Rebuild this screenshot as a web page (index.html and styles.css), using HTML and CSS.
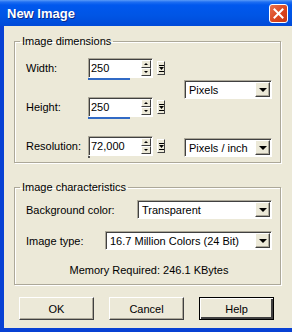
FILE: index.html
```html
<!DOCTYPE html>
<html>
<head>
  <title>New Image</title>
  <link rel="stylesheet" href="styles.css">
</head>
<body>
  <div class="window">
    <div class="titlebar">
      <span class="title">New Image</span>
      <div class="close">
        <svg width="11" height="11" viewBox="0 0 11 11">
          <path d="M1.5 1.5 L9.5 9.5 M9.5 1.5 L1.5 9.5" stroke="#fff" stroke-width="2" stroke-linecap="square"/>
        </svg>
      </div>
    </div>

    <div class="frame">
      <fieldset class="group">
        <legend>Image dimensions</legend>
        <div class="dims">
          <label class="dim-label r1">Width:</label>
          <div class="spin-wrap r1">
            <div class="spin">
              <div class="spin-box">
                <span class="spin-value">250</span>
                <div class="spin-btns">
                  <div class="spin-btn"><i class="tri-up"></i></div>
                  <div class="spin-btn"><i class="tri-down"></i></div>
                </div>
              </div>
              <div class="spin-menu">
                <svg width="5" height="9" viewBox="0 0 5 9">
                  <path d="M0 1.5 H5 M0 7.5 H5" stroke="#000" stroke-width="1"/>
                  <path d="M0 3 H5 L2.5 6 Z" fill="#000"/>
                </svg>
              </div>
            </div>
            <div class="track"></div>
          </div>
          <div class="select sel-units">
            <span class="sel-text">Pixels</span>
            <div class="drop-btn"><i class="tri-drop"></i></div>
          </div>

          <label class="dim-label r2">Height:</label>
          <div class="spin-wrap r2">
            <div class="spin">
              <div class="spin-box">
                <span class="spin-value">250</span>
                <div class="spin-btns">
                  <div class="spin-btn"><i class="tri-up"></i></div>
                  <div class="spin-btn"><i class="tri-down"></i></div>
                </div>
              </div>
              <div class="spin-menu">
                <svg width="5" height="9" viewBox="0 0 5 9">
                  <path d="M0 1.5 H5 M0 7.5 H5" stroke="#000" stroke-width="1"/>
                  <path d="M0 3 H5 L2.5 6 Z" fill="#000"/>
                </svg>
              </div>
            </div>
            <div class="track"></div>
          </div>

          <label class="dim-label r3">Resolution:</label>
          <div class="spin-wrap r3">
            <div class="spin">
              <div class="spin-box">
                <span class="spin-value">72,000</span>
                <div class="spin-btns">
                  <div class="spin-btn"><i class="tri-up"></i></div>
                  <div class="spin-btn"><i class="tri-down"></i></div>
                </div>
              </div>
              <div class="spin-menu">
                <svg width="5" height="9" viewBox="0 0 5 9">
                  <path d="M0 1.5 H5 M0 7.5 H5" stroke="#000" stroke-width="1"/>
                  <path d="M0 3 H5 L2.5 6 Z" fill="#000"/>
                </svg>
              </div>
            </div>
            <div class="track track-min"></div>
          </div>
          <div class="select sel-res">
            <span class="sel-text">Pixels / inch</span>
            <div class="drop-btn"><i class="tri-drop"></i></div>
          </div>
        </div>
      </fieldset>

      <fieldset class="group group-chars">
        <legend>Image characteristics</legend>
        <div class="chars">
          <div class="char-row">
            <label>Background color:</label>
            <div class="select sel-bg">
              <span class="sel-text">Transparent</span>
              <div class="drop-btn"><i class="tri-drop"></i></div>
            </div>
          </div>
          <div class="char-row row-type">
            <label>Image type:</label>
            <div class="select sel-type">
              <span class="sel-text">16.7 Million Colors (24 Bit)</span>
              <div class="drop-btn"><i class="tri-drop"></i></div>
            </div>
          </div>
          <p class="memory">Memory Required: 246.1 KBytes</p>
        </div>
      </fieldset>

      <div class="buttons">
        <button class="btn">OK</button>
        <button class="btn">Cancel</button>
        <button class="btn btn-default">Help</button>
      </div>
    </div>
  </div>
</body>
</html>
```

FILE: styles.css
```css
* {
  box-sizing: border-box;
}

body {
  margin: 0;
  font-family: "Liberation Sans", Arial, sans-serif;
  font-size: 11px;
  color: #000;
}

.window {
  width: 292px;
  height: 332px;
  display: flex;
  flex-direction: column;
}

.titlebar {
  height: 26px;
  display: flex;
  align-items: center;
  justify-content: space-between;
  padding: 0 4px 0 7px;
  background: linear-gradient(#5a9cf8 0, #1f6ff2 2px, #0058ee 5px, #0055e5 60%, #004ad8 100%);
}

.title {
  color: #fff;
  font-weight: bold;
  font-size: 13px;
  text-shadow: 1px 1px #0a2a8a;
}

.close {
  width: 19px;
  height: 19px;
  border: 1px solid #fff;
  border-radius: 3px;
  background: linear-gradient(135deg, #e8714f, #d9431c 60%, #c63a15);
  display: flex;
  align-items: center;
  justify-content: center;
}

.frame {
  flex: 1;
  background-color: #ece9d8;
  border-left: 4px solid #0841d4;
  border-bottom: 4px solid #0841d4;
  padding: 8px 11px 0 10px;
}

.group {
  margin: 0;
  padding: 0;
  border: 1px solid #aca899;
  box-shadow: inset 1px 1px #fff, 1px 1px #fff;
}

.group legend {
  margin-left: 5px;
  padding: 0 2px;
  line-height: 14px;
}

.dims {
  display: grid;
  grid-template-columns: 62px 96px 88px;
  grid-template-rows: 39px 39px 22px;
  padding: 10px 0 4px 11px;
}

.r1 {
  grid-row: 1;
}

.r2 {
  grid-row: 2;
}

.r3 {
  grid-row: 3;
}

.dim-label {
  grid-column: 1;
  line-height: 20px;
}

.spin-wrap {
  grid-column: 2;
}

.spin {
  display: flex;
  align-items: flex-start;
}

.spin-box {
  width: 65px;
  height: 20px;
  display: flex;
  background-color: #fff;
  border: 1px solid;
  border-color: #aca899 #fff #fff #aca899;
  box-shadow: inset 1px 1px #404040;
  padding: 1px 1px 1px 2px;
}

.spin-value {
  flex: 1;
  line-height: 17px;
}

.spin-btns {
  width: 10px;
  display: flex;
  flex-direction: column;
}

.spin-btn {
  flex: 1;
  background-color: #ece9d8;
  border: 1px solid;
  border-color: #fff #404040 #404040 #fff;
  display: flex;
  align-items: center;
  justify-content: center;
}

.tri-up {
  border-left: 2px solid transparent;
  border-right: 2px solid transparent;
  border-bottom: 2px solid #000;
}

.tri-down {
  border-left: 2px solid transparent;
  border-right: 2px solid transparent;
  border-top: 2px solid #000;
}

.spin-menu {
  width: 8px;
  height: 14px;
  margin: 3px 0 0 4px;
  background-color: #ece9d8;
  border: 1px solid;
  border-color: #fff #404040 #404040 #fff;
  display: flex;
  align-items: center;
  justify-content: center;
}

.track {
  width: 42px;
  height: 2px;
  background-color: #316ac5;
}

.track-min {
  width: 2px;
  background-color: #555;
}

.select {
  height: 19px;
  display: flex;
  align-items: center;
  background-color: #fff;
  border: 1px solid;
  border-color: #aca899 #fff #fff #aca899;
  box-shadow: inset 1px 1px #404040;
  padding: 1px 1px 1px 2px;
}

.sel-text {
  flex: 1;
  line-height: 16px;
  padding-left: 2px;
  white-space: nowrap;
}

.drop-btn {
  width: 15px;
  height: 15px;
  background-color: #ece9d8;
  border: 1px solid;
  border-color: #fff #404040 #404040 #fff;
  box-shadow: inset -1px -1px #aca899;
  display: flex;
  align-items: center;
  justify-content: center;
}

.tri-drop {
  border-left: 4px solid transparent;
  border-right: 4px solid transparent;
  border-top: 4px solid #000;
}

.sel-units {
  grid-column: 3;
  grid-row: 1 / 3;
  align-self: start;
  margin-top: 22px;
}

.sel-res {
  grid-column: 3;
  grid-row: 3;
  margin-top: 2px;
}

.group-chars {
  margin-top: 17px;
}

.chars {
  padding: 6px 8px 7px 11px;
}

.char-row {
  display: flex;
  align-items: center;
  justify-content: space-between;
}

.row-type {
  margin-top: 12px;
}

.sel-bg {
  width: 135px;
}

.sel-type {
  width: 167px;
}

.memory {
  margin: 13px 0 0;
  text-align: center;
  line-height: 14px;
}

.buttons {
  display: flex;
  gap: 15px;
  margin-top: 12px;
  padding-left: 5px;
}

.btn {
  width: 75px;
  height: 23px;
  font-family: inherit;
  font-size: 11px;
  background-color: #ece9d8;
  border: 1px solid;
  border-color: #fff #404040 #404040 #fff;
  box-shadow: inset -1px -1px #aca899;
  padding: 0;
}

.btn-default {
  border: 1px solid #000;
  box-shadow: inset 1px 1px #fff, inset -2px -2px #404040;
}
```
